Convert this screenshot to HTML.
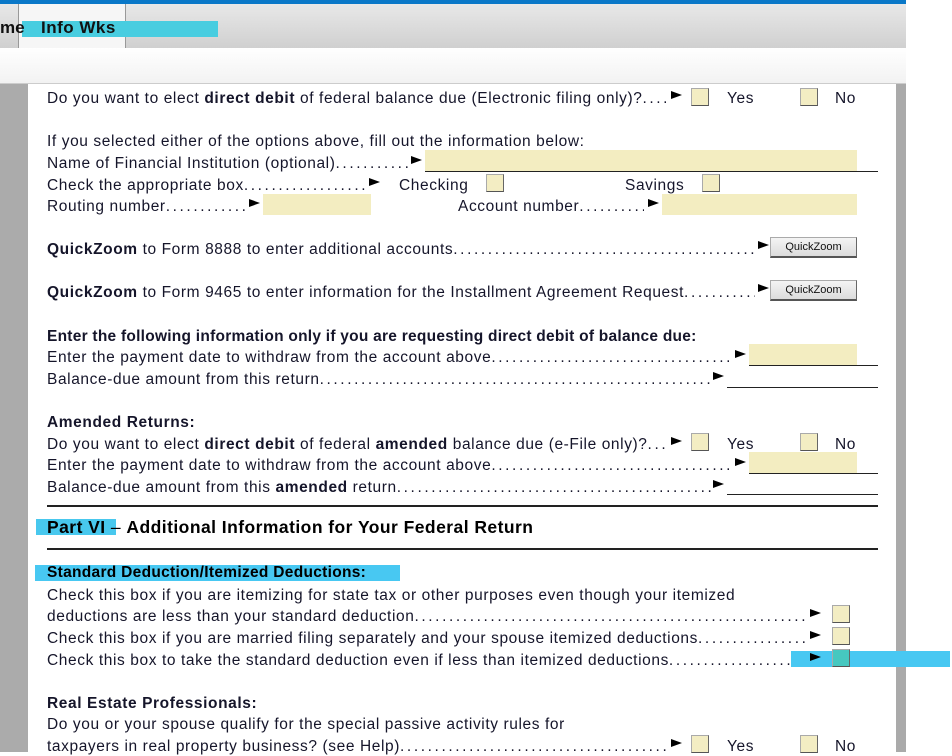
<!DOCTYPE html>
<html><head><meta charset="utf-8"><style>
*{margin:0;padding:0;box-sizing:border-box}
body{width:952px;height:752px;overflow:hidden;background:#fff;font-family:"Liberation Sans",Arial,sans-serif;position:relative;color:#111}
.a{position:absolute}
.t{position:absolute;font-size:15.5px;line-height:18px;white-space:nowrap;color:#15152a;letter-spacing:0.6px}
.l{position:absolute;left:47px;font-size:15.5px;line-height:18px;white-space:nowrap;color:#15152a;letter-spacing:0.6px;display:flex}
.l .d{flex:1;overflow:hidden;letter-spacing:2.6px}
.ar{position:absolute;width:0;height:0;border-top:4px solid transparent;border-bottom:4px solid transparent;border-left:11px solid #000}
.cb{position:absolute;width:18px;height:18px;background:#f3edc3;border:1px solid #aaa;border-right-color:#666;border-bottom-color:#555}
.f{position:absolute;background:#f3edc1}
.ul{position:absolute;height:1px;background:#222}
.qz{position:absolute;width:87px;height:21px;background:linear-gradient(#f4f4f4,#dcdcdc);border:1px solid #aaa;border-bottom:2px solid #555;border-right-color:#666;font-size:11px;text-align:center;line-height:18px;color:#111}
b{font-weight:bold}
</style></head><body>
<div class="a" style="left:0;top:0;width:906px;height:4px;background:#0a78c8"></div>
<div class="a" style="left:0;top:4px;width:906px;height:44px;background:linear-gradient(#e8e8e8,#d0d0d0)"></div>
<div class="a" style="left:18px;top:4px;width:108px;height:44px;background:#f6f6f6;border-left:1px solid #999;border-right:1px solid #999"></div>
<div class="a" style="left:22px;top:21px;width:196px;height:16px;background:#48cde0"></div>
<div class="a" style="left:0;top:18px;font-size:17px;font-weight:bold;color:#111">me</div>
<div class="a" style="left:41px;top:18px;font-size:17px;font-weight:bold;color:#111;letter-spacing:0.5px">Info Wks</div>
<div class="a" style="left:0;top:48px;width:906px;height:36px;background:linear-gradient(#fff,#f2f2f2);border-bottom:1px solid #ccc"></div>
<div class="a" style="left:0;top:84px;width:28px;height:668px;background:#ababab"></div>
<div class="a" style="left:896px;top:84px;width:10px;height:668px;background:#aaa"></div>

<div class="l" style="top:90px;width:620px"><span>Do you want to elect <b>direct debit</b> of federal balance due (Electronic filing only)?</span><span class="d">........</span></div>
<div class="ar" style="left:671px;top:91px"></div><div class="cb" style="left:691px;top:88px"></div>
<div class="t" style="left:727px;top:90px">Yes</div><div class="cb" style="left:800px;top:88px"></div><div class="t" style="left:835px;top:90px">No</div>

<div class="t" style="left:47px;top:133px">If you selected either of the options above, fill out the information below:</div>
<div class="l" style="top:155px;width:362px"><span>Name of Financial Institution (optional)</span><span class="d">..................</span></div>
<div class="ar" style="left:411px;top:156px"></div><div class="f" style="left:425px;top:150px;width:432px;height:21px"></div><div class="ul" style="left:425px;top:171px;width:453px"></div>
<div class="l" style="top:177px;width:320px"><span>Check the appropriate box</span><span class="d">..........................</span></div>
<div class="ar" style="left:369px;top:178px"></div><div class="t" style="left:399px;top:177px">Checking</div><div class="cb" style="left:486px;top:174px"></div>
<div class="t" style="left:625px;top:177px">Savings</div><div class="cb" style="left:702px;top:174px"></div>
<div class="l" style="top:198px;width:198px"><span>Routing number</span><span class="d">....................</span></div>
<div class="ar" style="left:249px;top:199px"></div><div class="f" style="left:263px;top:194px;width:108px;height:21px"></div>
<div class="l" style="top:198px;left:458px;width:186px"><span>Account number</span><span class="d">....................</span></div>
<div class="ar" style="left:648px;top:199px"></div><div class="f" style="left:662px;top:194px;width:195px;height:21px"></div>

<div class="l" style="top:241px;width:708px"><span><b>QuickZoom</b> to Form 8888 to enter additional accounts</span><span class="d">..................................................................</span></div>
<div class="ar" style="left:758px;top:241px"></div><div class="qz" style="left:770px;top:237px">QuickZoom</div>
<div class="l" style="top:284px;width:708px"><span><b>QuickZoom</b> to Form 9465 to enter information for the Installment Agreement Request</span><span class="d">..............................</span></div>
<div class="ar" style="left:758px;top:284px"></div><div class="qz" style="left:770px;top:280px">QuickZoom</div>

<div class="t" style="left:47px;top:328px;letter-spacing:0.25px"><b>Enter the following information only if you are requesting direct debit of balance due:</b></div>
<div class="l" style="top:349px;width:686px"><span>Enter the payment date to withdraw from the account above</span><span class="d">..................................................</span></div>
<div class="ar" style="left:735px;top:350px"></div><div class="f" style="left:749px;top:344px;width:108px;height:21px"></div><div class="ul" style="left:749px;top:365px;width:129px"></div>
<div class="l" style="top:371px;width:664px"><span>Balance-due amount from this return</span><span class="d">..............................................................................</span></div>
<div class="ar" style="left:713px;top:372px"></div><div class="ul" style="left:727px;top:387px;width:151px"></div>

<div class="t" style="left:47px;top:414px"><b>Amended Returns:</b></div>
<div class="l" style="top:436px;width:620px"><span>Do you want to elect <b>direct debit</b> of federal <b>amended</b> balance due (e-File only)? </span><span class="d">.........</span></div>
<div class="ar" style="left:671px;top:437px"></div><div class="cb" style="left:691px;top:433px"></div>
<div class="t" style="left:727px;top:436px">Yes</div><div class="cb" style="left:800px;top:433px"></div><div class="t" style="left:835px;top:436px">No</div>
<div class="l" style="top:457px;width:686px"><span>Enter the payment date to withdraw from the account above</span><span class="d">..................................................</span></div>
<div class="ar" style="left:735px;top:458px"></div><div class="f" style="left:749px;top:452px;width:108px;height:21px"></div><div class="ul" style="left:749px;top:473px;width:129px"></div>
<div class="l" style="top:479px;width:664px"><span>Balance-due amount from this <b>amended</b> return </span><span class="d">..............................................................................</span></div>
<div class="ar" style="left:713px;top:480px"></div><div class="ul" style="left:727px;top:494px;width:151px"></div>

<div class="a" style="left:47px;top:505px;width:831px;height:2px;background:#222"></div>
<div class="a" style="left:36px;top:519px;width:80px;height:16px;background:#48c8ee"></div>
<div class="t" style="left:47px;top:517px;font-size:17.5px;line-height:21px;color:#000;letter-spacing:0.45px"><b>Part VI</b> – <b>Additional Information for Your Federal Return</b></div>
<div class="a" style="left:47px;top:548px;width:831px;height:2px;background:#222"></div>

<div class="a" style="left:35px;top:565px;width:365px;height:16px;background:#48c8f2"></div>
<div class="t" style="left:47px;top:564px;color:#000;letter-spacing:0.3px"><b>Standard Deduction/Itemized Deductions:</b></div>
<div class="t" style="left:47px;top:587px">Check this box if you are itemizing for state tax or other purposes even though your itemized</div>
<div class="l" style="top:608px;width:760px"><span>deductions are less than your standard deduction</span><span class="d">..................................................................................</span></div>
<div class="ar" style="left:810px;top:609px"></div><div class="cb" style="left:832px;top:605px"></div>
<div class="l" style="top:630px;width:760px"><span>Check this box if you are married filing separately and your spouse itemized deductions </span><span class="d">...............................</span></div>
<div class="ar" style="left:810px;top:631px"></div><div class="cb" style="left:832px;top:627px"></div>
<div class="l" style="top:652px;width:760px"><span>Check this box to take the standard deduction even if less than itemized deductions</span><span class="d">...................................</span></div>
<div class="a" style="left:791px;top:651px;width:159px;height:16px;background:#48c8f2"></div>
<div class="ar" style="left:810px;top:653px"></div><div class="cb" style="left:832px;top:649px;background:#46c8c0"></div>

<div class="t" style="left:47px;top:695px"><b>Real Estate Professionals:</b></div>
<div class="t" style="left:47px;top:716px">Do you or your spouse qualify for the special passive activity rules for</div>
<div class="l" style="top:738px;width:620px"><span>taxpayers in real property business? (see Help)</span><span class="d">...............................................................</span></div>
<div class="ar" style="left:671px;top:739px"></div><div class="cb" style="left:691px;top:735px"></div>
<div class="t" style="left:727px;top:738px">Yes</div><div class="cb" style="left:800px;top:735px"></div><div class="t" style="left:835px;top:738px">No</div>
</body></html>
